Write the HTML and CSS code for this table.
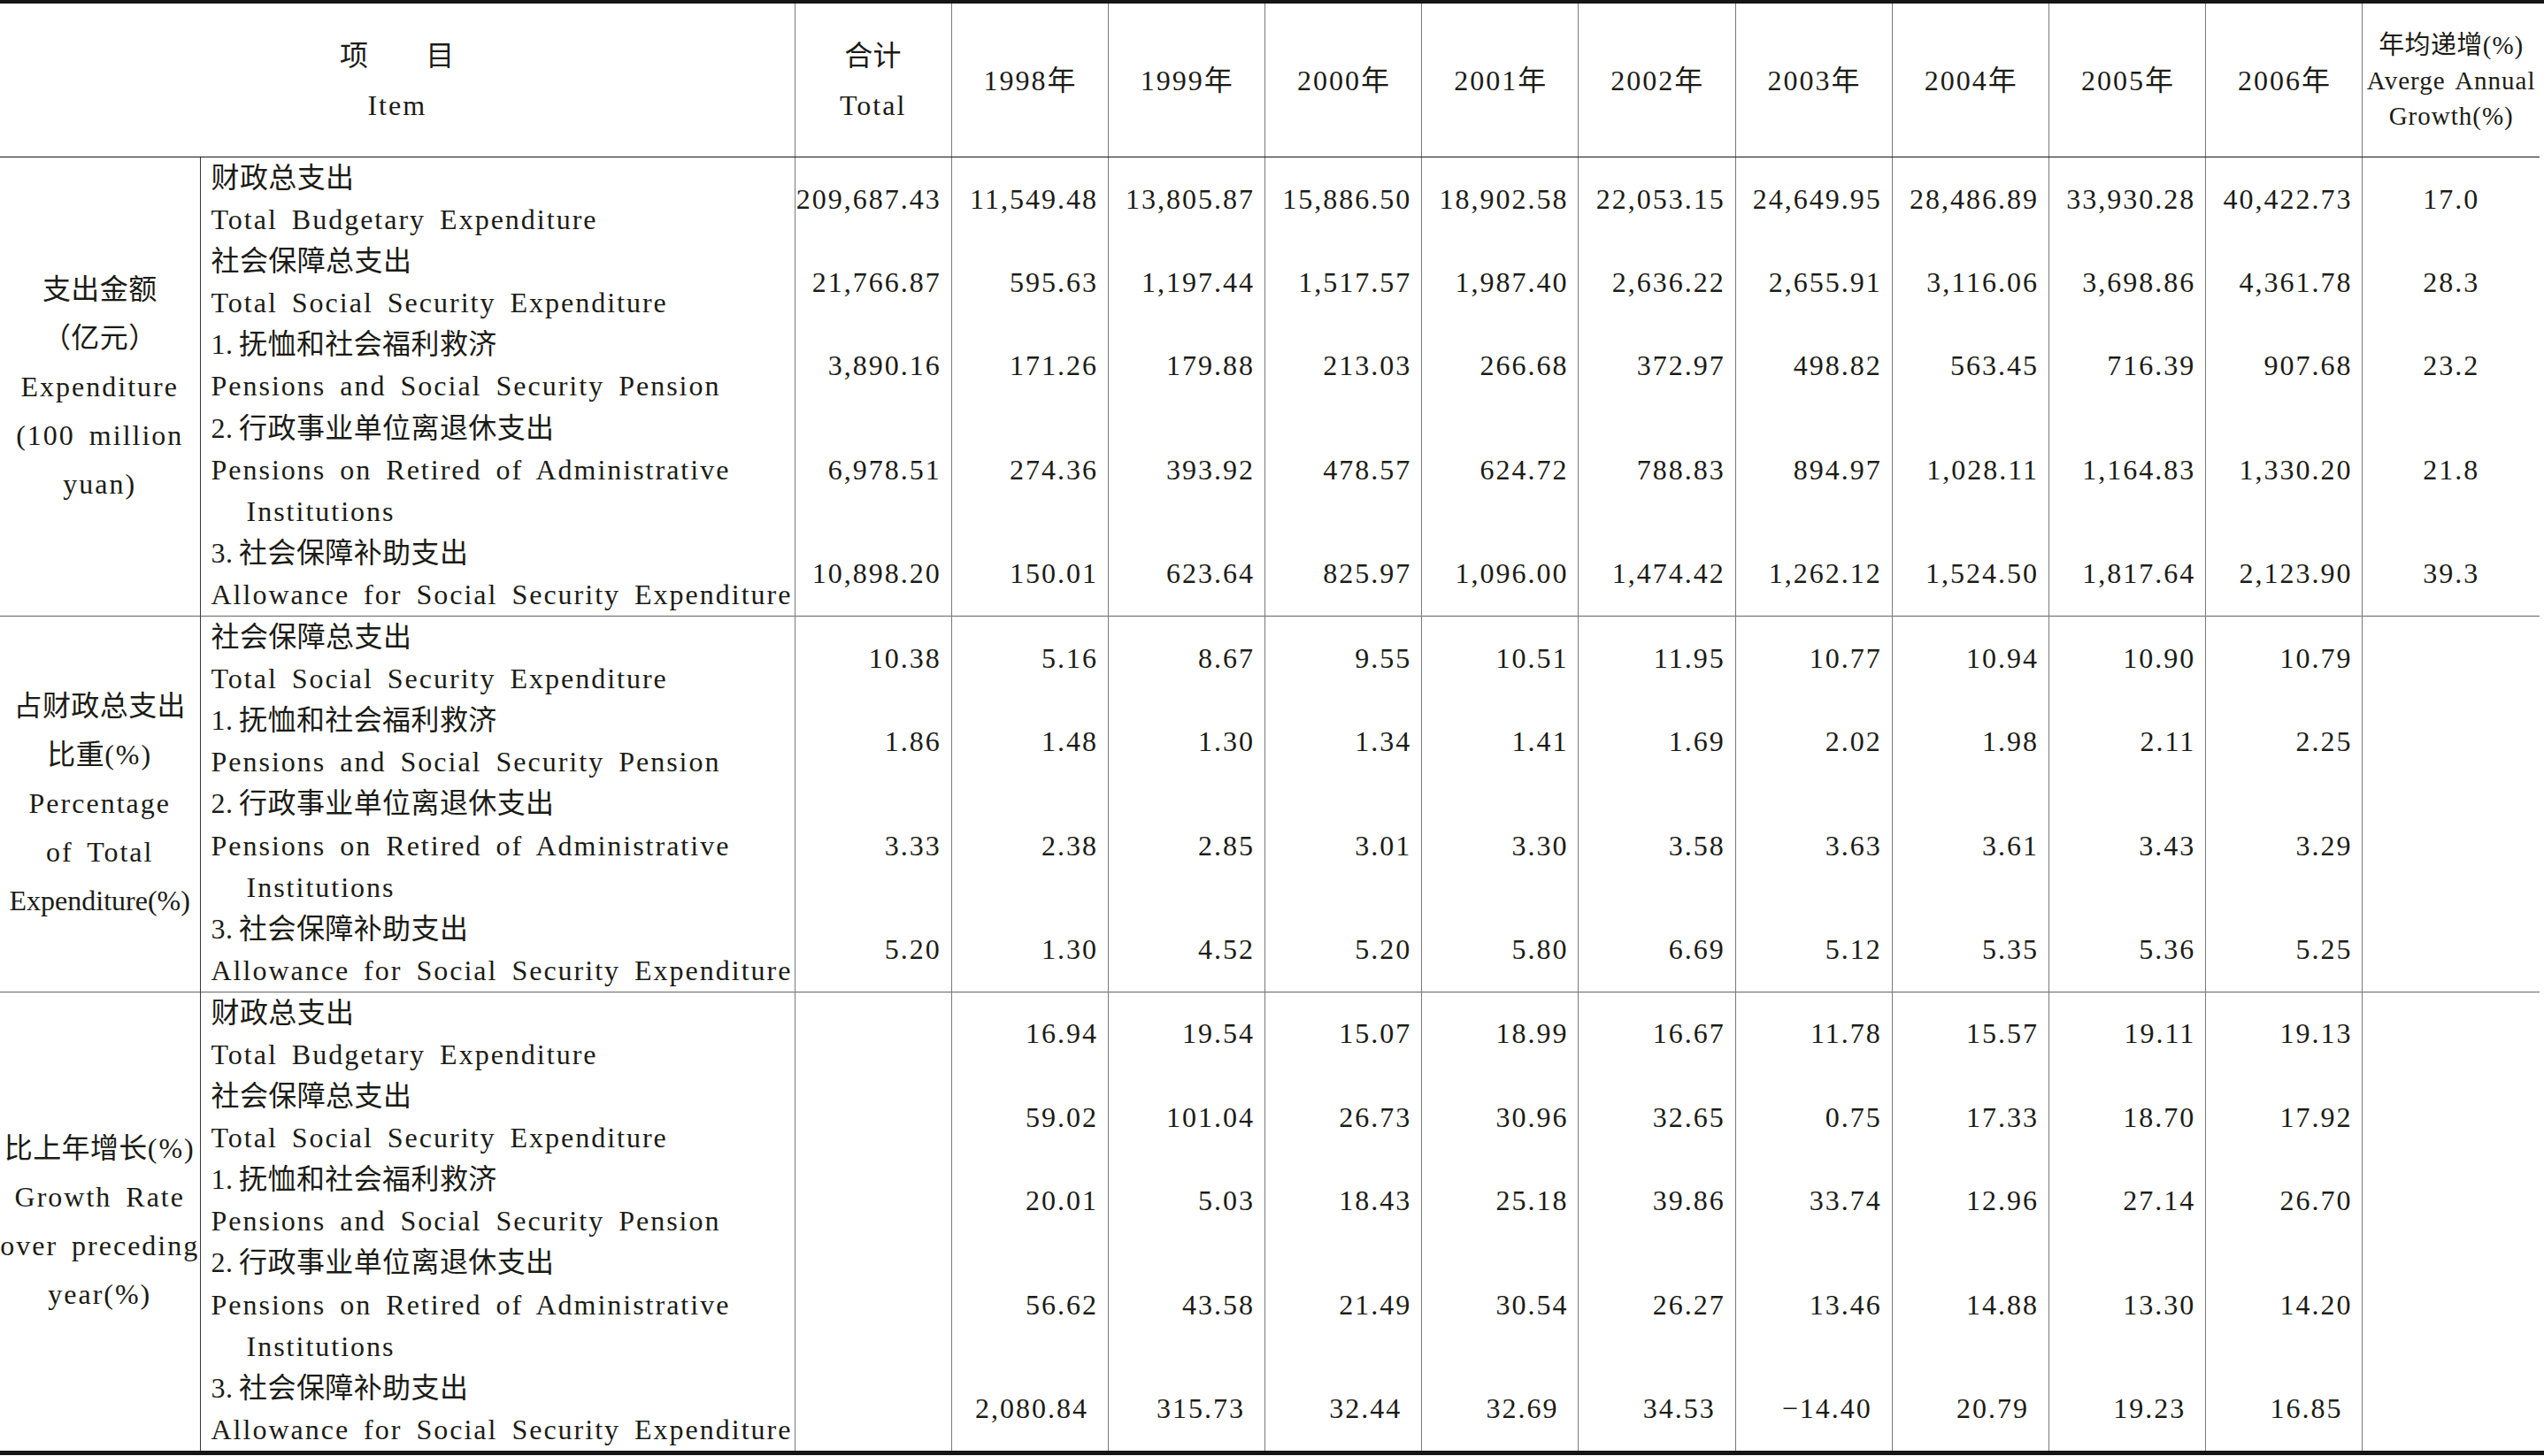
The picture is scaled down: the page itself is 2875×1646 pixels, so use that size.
FILE: index.html
```html
<!DOCTYPE html>
<html lang="zh-CN">
<head>
<meta charset="utf-8">
<title>社会保障支出</title>
<link rel="stylesheet" href="styles.css">
</head>
<body>
<div class="sheet">
<table class="tbl">
  <colgroup>
    <col class="c-cat"><col class="c-item">
    <col class="c-num"><col class="c-num"><col class="c-num"><col class="c-num"><col class="c-num">
    <col class="c-num"><col class="c-num"><col class="c-num"><col class="c-num"><col class="c-num">
    <col class="c-avg">
  </colgroup>
  <thead>
    <tr class="head">
      <th colspan="2" class="h-first"><div class="hl zh">项　　目</div><div class="hl">Item</div></th>
      <th><div class="hl zh">合计</div><div class="hl">Total</div></th>
      <th>1998<span class="zh">年</span></th>
      <th>1999<span class="zh">年</span></th>
      <th>2000<span class="zh">年</span></th>
      <th>2001<span class="zh">年</span></th>
      <th>2002<span class="zh">年</span></th>
      <th>2003<span class="zh">年</span></th>
      <th>2004<span class="zh">年</span></th>
      <th>2005<span class="zh">年</span></th>
      <th>2006<span class="zh">年</span></th>
      <th class="h-avg"><div class="al"><span class="zh">年均递增</span>(%)</div><div class="al">Averge Annual</div><div class="al">Growth(%)</div></th>
    </tr>
  </thead>
  <tbody>
    <!-- Section 1 -->
    <tr>
      <td class="cat" rowspan="5">
        <div class="cl zh">支出金额</div>
        <div class="cl zh">（亿元）</div>
        <div class="cl">Expenditure</div>
        <div class="cl">(100 million</div>
        <div class="cl">yuan)</div>
      </td>
      <td class="item"><div class="ln zh">财政总支出</div><div class="ln">Total Budgetary Expenditure</div></td>
      <td class="num">209,687.43</td><td class="num">11,549.48</td><td class="num">13,805.87</td><td class="num">15,886.50</td><td class="num">18,902.58</td>
      <td class="num">22,053.15</td><td class="num">24,649.95</td><td class="num">28,486.89</td><td class="num">33,930.28</td><td class="num">40,422.73</td>
      <td class="avg">17.0</td>
    </tr>
    <tr>
      <td class="item"><div class="ln zh">社会保障总支出</div><div class="ln">Total Social Security Expenditure</div></td>
      <td class="num">21,766.87</td><td class="num">595.63</td><td class="num">1,197.44</td><td class="num">1,517.57</td><td class="num">1,987.40</td>
      <td class="num">2,636.22</td><td class="num">2,655.91</td><td class="num">3,116.06</td><td class="num">3,698.86</td><td class="num">4,361.78</td>
      <td class="avg">28.3</td>
    </tr>
    <tr>
      <td class="item"><div class="ln zh">1.&thinsp;抚恤和社会福利救济</div><div class="ln">Pensions and Social Security Pension</div></td>
      <td class="num">3,890.16</td><td class="num">171.26</td><td class="num">179.88</td><td class="num">213.03</td><td class="num">266.68</td>
      <td class="num">372.97</td><td class="num">498.82</td><td class="num">563.45</td><td class="num">716.39</td><td class="num">907.68</td>
      <td class="avg">23.2</td>
    </tr>
    <tr>
      <td class="item"><div class="ln zh">2.&thinsp;行政事业单位离退休支出</div><div class="ln">Pensions on Retired of Administrative</div><div class="ln ind">Institutions</div></td>
      <td class="num">6,978.51</td><td class="num">274.36</td><td class="num">393.92</td><td class="num">478.57</td><td class="num">624.72</td>
      <td class="num">788.83</td><td class="num">894.97</td><td class="num">1,028.11</td><td class="num">1,164.83</td><td class="num">1,330.20</td>
      <td class="avg">21.8</td>
    </tr>
    <tr>
      <td class="item"><div class="ln zh">3.&thinsp;社会保障补助支出</div><div class="ln">Allowance for Social Security Expenditure</div></td>
      <td class="num">10,898.20</td><td class="num">150.01</td><td class="num">623.64</td><td class="num">825.97</td><td class="num">1,096.00</td>
      <td class="num">1,474.42</td><td class="num">1,262.12</td><td class="num">1,524.50</td><td class="num">1,817.64</td><td class="num">2,123.90</td>
      <td class="avg">39.3</td>
    </tr>

    <!-- Section 2 -->
    <tr class="sec">
      <td class="cat" rowspan="4">
        <div class="cl zh">占财政总支出</div>
        <div class="cl"><span class="zh">比重</span>(%)</div>
        <div class="cl">Percentage</div>
        <div class="cl">of Total</div>
        <div class="cl tight">Expenditure(%)</div>
      </td>
      <td class="item"><div class="ln zh">社会保障总支出</div><div class="ln">Total Social Security Expenditure</div></td>
      <td class="num">10.38</td><td class="num">5.16</td><td class="num">8.67</td><td class="num">9.55</td><td class="num">10.51</td>
      <td class="num">11.95</td><td class="num">10.77</td><td class="num">10.94</td><td class="num">10.90</td><td class="num">10.79</td>
      <td class="avg"></td>
    </tr>
    <tr>
      <td class="item"><div class="ln zh">1.&thinsp;抚恤和社会福利救济</div><div class="ln">Pensions and Social Security Pension</div></td>
      <td class="num">1.86</td><td class="num">1.48</td><td class="num">1.30</td><td class="num">1.34</td><td class="num">1.41</td>
      <td class="num">1.69</td><td class="num">2.02</td><td class="num">1.98</td><td class="num">2.11</td><td class="num">2.25</td>
      <td class="avg"></td>
    </tr>
    <tr>
      <td class="item"><div class="ln zh">2.&thinsp;行政事业单位离退休支出</div><div class="ln">Pensions on Retired of Administrative</div><div class="ln ind">Institutions</div></td>
      <td class="num">3.33</td><td class="num">2.38</td><td class="num">2.85</td><td class="num">3.01</td><td class="num">3.30</td>
      <td class="num">3.58</td><td class="num">3.63</td><td class="num">3.61</td><td class="num">3.43</td><td class="num">3.29</td>
      <td class="avg"></td>
    </tr>
    <tr>
      <td class="item"><div class="ln zh">3.&thinsp;社会保障补助支出</div><div class="ln">Allowance for Social Security Expenditure</div></td>
      <td class="num">5.20</td><td class="num">1.30</td><td class="num">4.52</td><td class="num">5.20</td><td class="num">5.80</td>
      <td class="num">6.69</td><td class="num">5.12</td><td class="num">5.35</td><td class="num">5.36</td><td class="num">5.25</td>
      <td class="avg"></td>
    </tr>

    <!-- Section 3 -->
    <tr class="sec">
      <td class="cat" rowspan="5">
        <div class="cl"><span class="zh">比上年增长</span>(%)</div>
        <div class="cl">Growth Rate</div>
        <div class="cl">over preceding</div>
        <div class="cl">year(%)</div>
      </td>
      <td class="item"><div class="ln zh">财政总支出</div><div class="ln">Total Budgetary Expenditure</div></td>
      <td class="num"></td><td class="num">16.94</td><td class="num">19.54</td><td class="num">15.07</td><td class="num">18.99</td>
      <td class="num">16.67</td><td class="num">11.78</td><td class="num">15.57</td><td class="num">19.11</td><td class="num">19.13</td>
      <td class="avg"></td>
    </tr>
    <tr>
      <td class="item"><div class="ln zh">社会保障总支出</div><div class="ln">Total Social Security Expenditure</div></td>
      <td class="num"></td><td class="num">59.02</td><td class="num">101.04</td><td class="num">26.73</td><td class="num">30.96</td>
      <td class="num">32.65</td><td class="num">0.75</td><td class="num">17.33</td><td class="num">18.70</td><td class="num">17.92</td>
      <td class="avg"></td>
    </tr>
    <tr>
      <td class="item"><div class="ln zh">1.&thinsp;抚恤和社会福利救济</div><div class="ln">Pensions and Social Security Pension</div></td>
      <td class="num"></td><td class="num">20.01</td><td class="num">5.03</td><td class="num">18.43</td><td class="num">25.18</td>
      <td class="num">39.86</td><td class="num">33.74</td><td class="num">12.96</td><td class="num">27.14</td><td class="num">26.70</td>
      <td class="avg"></td>
    </tr>
    <tr>
      <td class="item"><div class="ln zh">2.&thinsp;行政事业单位离退休支出</div><div class="ln">Pensions on Retired of Administrative</div><div class="ln ind">Institutions</div></td>
      <td class="num"></td><td class="num">56.62</td><td class="num">43.58</td><td class="num">21.49</td><td class="num">30.54</td>
      <td class="num">26.27</td><td class="num">13.46</td><td class="num">14.88</td><td class="num">13.30</td><td class="num">14.20</td>
      <td class="avg"></td>
    </tr>
    <tr class="last">
      <td class="item"><div class="ln zh">3.&thinsp;社会保障补助支出</div><div class="ln">Allowance for Social Security Expenditure</div></td>
      <td class="num"></td><td class="num">2,080.84</td><td class="num">315.73</td><td class="num">32.44</td><td class="num">32.69</td>
      <td class="num">34.53</td><td class="num">−14.40</td><td class="num">20.79</td><td class="num">19.23</td><td class="num">16.85</td>
      <td class="avg"></td>
    </tr>
  </tbody>
</table>
</div>
</body>
</html>
```

FILE: styles.css
```css
html, body {
  margin: 0;
  padding: 0;
  background: #ffffff;
}

body {
  color: #1b1b15;
  font-family: "Liberation Serif", "Noto Sans CJK SC", serif;
  font-size: 32px;
  letter-spacing: 2px;
  word-spacing: 6px;
}

.sheet {
  width: 2875px;
  border-top: 4px solid #151515;
  border-bottom: 5px solid #151515;
}

.tbl {
  width: 2870px;
  border-collapse: collapse;
  table-layout: fixed;
}

.c-cat { width: 226px; }
.c-item { width: 672px; }
.c-num { width: 177.2px; }
.c-avg { width: 200px; }

.tbl th,
.tbl td {
  padding: 0;
  font-weight: normal;
  border-left: 1px solid #7a7a7a;
}

.zh {
  letter-spacing: 0.4px;
}

/* header */
.head th {
  height: 173px;
  border-bottom: 1px solid #151515;
  text-align: center;
  vertical-align: middle;
  white-space: nowrap;
  line-height: 40px;
}

.head th.h-first {
  border-left: none;
}

.hl {
  line-height: 56px;
}

.h-avg {
  font-size: 29px;
  letter-spacing: 1px;
  word-spacing: 4px;
}

.al {
  line-height: 40px;
}

/* body */
.tbl td.cat {
  border-left: none;
  text-align: center;
  vertical-align: middle;
  white-space: nowrap;
}

.cl {
  line-height: 55px;
}

.cl.tight {
  letter-spacing: 0;
  word-spacing: 0;
}

.tbl td.item {
  border-left: 1px solid #3a3a3a;
  padding-left: 12px;
  text-align: left;
  vertical-align: middle;
  white-space: nowrap;
}

.ln {
  line-height: 47.1px;
}

.ln.ind {
  padding-left: 40px;
}

.tbl td.num {
  text-align: right;
  padding-right: 11px;
  vertical-align: middle;
  white-space: nowrap;
}

.tbl td.avg {
  text-align: center;
  vertical-align: middle;
  white-space: nowrap;
}

.sec td {
  border-top: 1px solid #666666;
}

.last td.num {
  padding-right: 22px;
}
```
